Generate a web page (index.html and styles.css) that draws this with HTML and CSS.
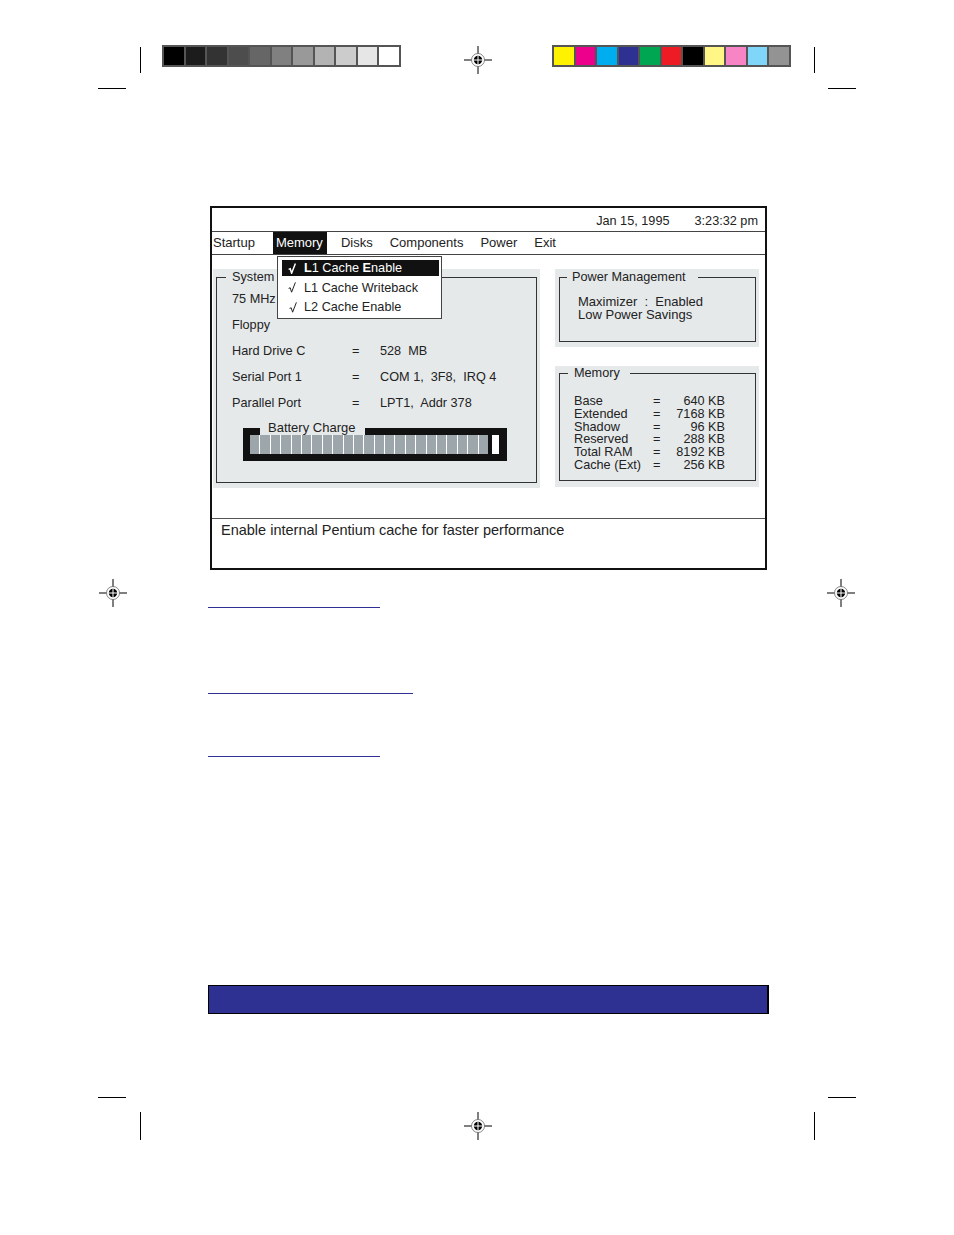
FILE: index.html
```html
<!DOCTYPE html>
<html>
<head>
<meta charset="utf-8">
<link rel="stylesheet" href="styles.css">
</head>
<body>
<div class="page">
  <div class="crop crop-v tl-v"></div>
  <div class="crop crop-h tl-h"></div>
  <div class="crop crop-v tr-v"></div>
  <div class="crop crop-h tr-h"></div>
  <div class="crop crop-h bl-h"></div>
  <div class="crop crop-v bl-v"></div>
  <div class="crop crop-h br-h"></div>
  <div class="crop crop-v br-v"></div>

  <svg class="reg reg-top" viewBox="-15 -15 30 30"><line x1="-14" y1="0" x2="14" y2="0"/><line x1="0" y1="-14" x2="0" y2="14"/><circle class="ring" r="6.5"/><circle class="dot" r="4.2"/><line class="wx" x1="-4.2" y1="0" x2="4.2" y2="0"/><line class="wx" x1="0" y1="-4.2" x2="0" y2="4.2"/></svg>
  <svg class="reg reg-left" viewBox="-15 -15 30 30"><line x1="-14" y1="0" x2="14" y2="0"/><line x1="0" y1="-14" x2="0" y2="14"/><circle class="ring" r="6.5"/><circle class="dot" r="4.2"/><line class="wx" x1="-4.2" y1="0" x2="4.2" y2="0"/><line class="wx" x1="0" y1="-4.2" x2="0" y2="4.2"/></svg>
  <svg class="reg reg-right" viewBox="-15 -15 30 30"><line x1="-14" y1="0" x2="14" y2="0"/><line x1="0" y1="-14" x2="0" y2="14"/><circle class="ring" r="6.5"/><circle class="dot" r="4.2"/><line class="wx" x1="-4.2" y1="0" x2="4.2" y2="0"/><line class="wx" x1="0" y1="-4.2" x2="0" y2="4.2"/></svg>
  <svg class="reg reg-bottom" viewBox="-15 -15 30 30"><line x1="-14" y1="0" x2="14" y2="0"/><line x1="0" y1="-14" x2="0" y2="14"/><circle class="ring" r="6.5"/><circle class="dot" r="4.2"/><line class="wx" x1="-4.2" y1="0" x2="4.2" y2="0"/><line class="wx" x1="0" y1="-4.2" x2="0" y2="4.2"/></svg>

  <header class="strips">
    <div class="strip">
      <span class="g0"></span><span class="g1"></span><span class="g2"></span><span class="g3"></span><span class="g4"></span><span class="g5"></span><span class="g6"></span><span class="g7"></span><span class="g8"></span><span class="g9"></span><span class="g10"></span>
    </div>
    <div class="strip">
      <span class="c-y"></span><span class="c-m"></span><span class="c-c"></span><span class="c-b"></span><span class="c-g"></span><span class="c-r"></span><span class="c-k"></span><span class="c-ly"></span><span class="c-lm"></span><span class="c-lc"></span><span class="c-gr"></span>
    </div>
  </header>

  <section class="screen">
    <div class="status"><span>Jan 15, 1995</span><span>3:23:32 pm</span></div>
    <nav class="menubar">
      <span class="first">Startup</span>
      <span class="active">Memory</span>
      <span>Disks</span>
      <span>Components</span>
      <span>Power</span>
      <span>Exit</span>
    </nav>
    <div class="body">
      <div class="panel panel-sys">
        <fieldset class="box box-sys">
          <legend>System</legend>
          <div class="rows">
            <span>75 MHz Pentium</span><span></span><span></span>
            <span>Floppy</span><span></span><span></span>
            <span>Hard Drive C</span><span>=</span><span class="pre">528  MB</span>
            <span>Serial Port 1</span><span>=</span><span class="pre">COM 1,  3F8,  IRQ 4</span>
            <span>Parallel Port</span><span>=</span><span class="pre">LPT1,  Addr 378</span>
          </div>
          <div class="battery">
            <span class="battery-label">Battery Charge</span>
            <div class="segs">
              <i></i><i></i><i></i><i></i><i></i><i></i><i></i><i></i><i></i><i></i><i></i><i></i><i></i><i></i><i></i><i></i><i></i><i></i><i></i><i></i><i></i><i></i><i></i>
            </div>
            <div class="cell"></div>
          </div>
        </fieldset>
      </div>
      <div class="col">
        <div class="panel panel-pm">
          <fieldset class="box box-pm">
            <legend>Power Management</legend>
            <div class="pm-text">
              <div class="pre">Maximizer  :  Enabled</div>
              <div>Low Power Savings</div>
            </div>
          </fieldset>
        </div>
        <div class="panel panel-mem">
          <fieldset class="box box-mem">
            <legend>Memory</legend>
            <div class="mem-rows">
              <span>Base</span><span>=</span><span class="v">640 KB</span>
              <span>Extended</span><span>=</span><span class="v">7168 KB</span>
              <span>Shadow</span><span>=</span><span class="v">96 KB</span>
              <span>Reserved</span><span>=</span><span class="v">288 KB</span>
              <span>Total RAM</span><span>=</span><span class="v">8192 KB</span>
              <span>Cache (Ext)</span><span>=</span><span class="v">256 KB</span>
            </div>
          </fieldset>
        </div>
      </div>
    </div>
    <div class="desc">Enable internal Pentium cache for faster performance</div>

    <div class="dropdown">
      <div class="item sel"><svg class="chk" viewBox="0 0 8 11"><path d="M0.6 6.4 L2.2 5.8 L3.6 10.2 L7.4 0.4"/></svg><span><b>L</b>1 Cache <b>E</b>nable</span></div>
      <div class="item"><svg class="chk" viewBox="0 0 8 11"><path d="M0.6 6.4 L2.2 5.8 L3.6 10.2 L7.4 0.4"/></svg><span>L1 Cache Writeback</span></div>
      <div class="item"><svg class="chk chk3" viewBox="0 0 8 11"><path d="M0.6 6.4 L2.2 5.8 L3.6 10.2 L7.4 0.4"/></svg><span>L2 Cache Enable</span></div>
    </div>
  </section>

  <div class="rules">
    <div class="rule r1"></div>
    <div class="rule r2"></div>
    <div class="rule r3"></div>
  </div>
  <div class="bluebar"></div>
</div>
</body>
</html>
```
FILE: styles.css
```css
* { box-sizing: border-box; }
body { margin: 0; background: #fff; font-family: "Liberation Sans", Arial, sans-serif; color: #222; }
.page { position: relative; width: 954px; height: 1235px; overflow: hidden; }

/* print marks */
.crop { position: absolute; background: #000; }
.crop-v { width: 1px; height: 26px; }
.crop-h { height: 1px; width: 28px; }
.tl-v { left: 140px; top: 47px; }
.tl-h { left: 98px; top: 88px; }
.tr-v { left: 814px; top: 47px; }
.tr-h { left: 828px; top: 88px; }
.bl-h { left: 98px; top: 1097px; }
.bl-v { left: 140px; top: 1112px; height: 28px; }
.br-h { left: 828px; top: 1097px; }
.br-v { left: 814px; top: 1112px; height: 28px; }

.reg { position: absolute; width: 30px; height: 30px; }
.reg line { stroke: #000; stroke-width: 1; }
.reg .ring { fill: #fff; stroke: #666; stroke-width: 0.8; }
.reg .dot { fill: #000; }
.reg .wx { stroke: #fff; stroke-width: 1; }
.reg-top { left: 463px; top: 45px; }
.reg-left { left: 98px; top: 578px; }
.reg-right { left: 826px; top: 578px; }
.reg-bottom { left: 463px; top: 1111px; }

/* color strips */
.strips { display: flex; gap: 151px; padding: 45px 0 0 162px; }
.strip { display: flex; width: 239px; height: 22px; padding: 2px; gap: 2px; background: #555; }
.strip span { flex: 1; }
.g0 { background: #000; } .g1 { background: #1c1c1c; } .g2 { background: #333; }
.g3 { background: #4d4d4d; } .g4 { background: #666; } .g5 { background: #808080; }
.g6 { background: #999; } .g7 { background: #b3b3b3; } .g8 { background: #ccc; }
.g9 { background: #e6e6e6; } .g10 { background: #fff; }
.c-y { background: #fff200; } .c-m { background: #ec008c; } .c-c { background: #00aeef; }
.c-b { background: #2e3192; } .c-g { background: #00a651; } .c-r { background: #ed1c24; }
.c-k { background: #000; } .c-ly { background: #fff685; } .c-lm { background: #f784c5; }
.c-lc { background: #80d6f8; } .c-gr { background: #939393; }

/* BIOS screen */
.screen { position: relative; margin: 139px 0 0 210px; width: 557px; height: 364px; border: 2px solid #111; font-size: 12.7px; }
.status { height: 24px; border-bottom: 1px solid #444; display: flex; justify-content: flex-end; gap: 25px; padding: 2px 7px 0 0; line-height: 22px; }
.menubar { height: 23px; border-bottom: 1px solid #444; display: flex; gap: 11px; line-height: 22px; font-size: 13px; }
.menubar span { padding: 0 3px; }
.menubar .first { padding-left: 1px; margin-right: 4px; }
.menubar .active { background: #111; color: #fff; padding: 0 3px 0 3px; min-width: 54px; }

.body { height: 263px; display: flex; align-items: flex-start; gap: 15px; padding: 14px 0 0 1px; }
.panel { background: #e6e9ea; }
.panel-sys { width: 327px; padding: 0 3px 5px; }
.col { width: 204px; display: flex; flex-direction: column; gap: 19px; }
.panel-pm { padding: 0 3px 5px 4px; }
.panel-mem { padding: 0 3px 6px 4px; }

fieldset { margin: 0; min-width: 0; }
.box { border: 1px solid #333; }
.box legend { line-height: 16px; }

.box-sys { padding: 0 0 21px 9px; }
.box-sys > legend { padding: 0 6px; }
.rows { display: grid; grid-template-columns: 120px 28px auto; padding: 1px 0 0 6px; line-height: 26px; white-space: nowrap; }
.pre { white-space: pre; }

.battery { position: relative; display: flex; width: 264px; height: 33px; margin: 12px 0 0 17px; border: 7px solid #111; border-right-width: 8px; background: #111; }
.battery-label { position: absolute; left: 10px; top: -14px; padding: 0 10px 0 8px; line-height: 14px; font-size: 13px; background: #e6e9ea; }
.segs { display: flex; gap: 1px; width: 238px; margin-right: 4px; background: #fff; }
.segs i { flex: 1; background: #9ca6ab; }
.cell { width: 7px; background: #fff; }

.box-pm { padding: 10px 0 20px 7px; }
.box-pm legend { padding: 0 12px 0 5px; }
.pm-text { padding-left: 11px; line-height: 13px; font-size: 13px; }

.box-mem { padding: 15px 0 8px 8px; }
.box-mem legend { padding: 0 10px 0 6px; line-height: 14px; }
.mem-rows { display: grid; grid-template-columns: 79px 10px 62px; padding-left: 6px; line-height: 12.8px; }
.mem-rows .v { text-align: right; }

.desc { border-top: 1px solid #555; padding: 3px 9px; font-size: 14.5px; line-height: 17px; }

.dropdown { position: absolute; left: 65px; top: 48px; width: 165px; height: 63px; border: 1px solid #444; background: #fff; padding: 3px 2px 3px 4px; }
.item { display: flex; align-items: center; height: 16px; line-height: 16px; padding-left: 6px; margin-bottom: 3.5px; white-space: nowrap; overflow: hidden; }
.item:last-child { margin-bottom: 0; }
.item.sel { background: #111; color: #fff; }
.item b { font-weight: bold; }
.chk { width: 8px; height: 11px; margin-right: 8px; flex: none; fill: none; stroke: currentColor; stroke-width: 1; stroke-linejoin: miter; }
.sel .chk { stroke-width: 1.5; }
.chk3 { margin-left: 1px; margin-right: 7px; }

/* rules and bar */
.rules { margin-left: 208px; }
.rule { height: 1px; background: #2e3192; }
.r1 { margin-top: 37px; width: 172px; }
.r2 { margin-top: 85px; width: 205px; }
.r3 { margin-top: 62px; width: 172px; }
.bluebar { margin: 228px 0 0 208px; width: 561px; height: 29px; background: #2e3192; border: 1px solid #000; border-right-width: 2px; }
```
